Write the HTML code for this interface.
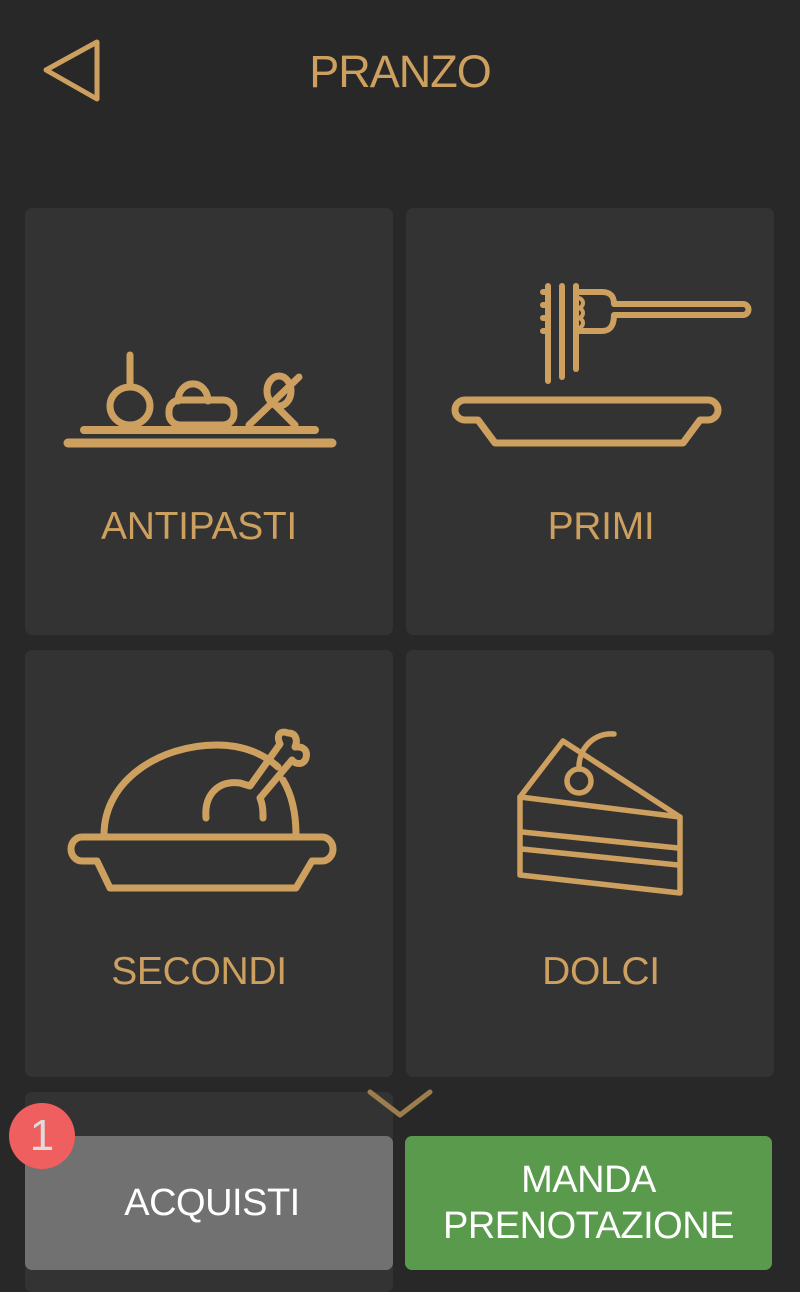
<!DOCTYPE html>
<html><head><meta charset="utf-8"><style>
html,body{margin:0;padding:0;background:#282828;width:800px;height:1280px;overflow:hidden;font-family:"Liberation Sans",sans-serif}
.c{position:absolute;background:#333;border-radius:7px}
.t{position:absolute;color:#CDA060;font-size:39px;text-align:center;letter-spacing:-0.3px}
.b{position:absolute;border-radius:7px;color:#fff;font-size:38px;text-align:center;display:flex;align-items:center;justify-content:center;line-height:46px;letter-spacing:-0.5px}
</style></head><body>
<div class="c" style="left:25px;top:208px;width:368px;height:427px"></div>
<div class="c" style="left:406px;top:208px;width:368px;height:427px"></div>
<div class="c" style="left:25px;top:650px;width:368px;height:427px"></div>
<div class="c" style="left:406px;top:650px;width:368px;height:427px"></div>
<div class="c" style="left:25px;top:1092px;width:368px;height:200px"></div>
<div class="t" style="left:200px;top:46px;width:400px;font-size:45px;letter-spacing:-1px">PRANZO</div>
<div class="t" style="left:15px;top:505px;width:368px">ANTIPASTI</div>
<div class="t" style="left:406px;top:505px;width:390px">PRIMI</div>
<div class="t" style="left:15px;top:950px;width:368px">SECONDI</div>
<div class="t" style="left:406px;top:950px;width:390px">DOLCI</div>
<div class="b" style="left:25px;top:1136px;width:368px;height:134px;background:#717171"><span style="margin-left:6px">ACQUISTI</span></div>
<div class="b" style="left:405px;top:1136px;width:367px;height:134px;background:#5A9A4C">MANDA<br>PRENOTAZIONE</div>
<div style="position:absolute;left:9px;top:1103px;width:66px;height:66px;border-radius:50%;background:#EF5F5F;color:#ddd;font-size:44px;text-align:center;line-height:66px">1</div>
<svg width="800" height="1280" style="position:absolute;left:0;top:0" fill="none" stroke="#CDA060" stroke-linecap="round" stroke-linejoin="round">
<path d="M46 70 L97 42 L97 99 Z" stroke-width="5"/>
<path d="M370 1092 L400 1115 L430 1092" stroke="#9C7D4E" stroke-width="5"/>
<g stroke-width="7">
<line x1="68" y1="443" x2="332" y2="443" stroke-width="9"/>
<line x1="84" y1="430" x2="315" y2="430" stroke-width="8"/>
<line x1="130" y1="355" x2="130" y2="385"/>
<ellipse cx="130" cy="406" rx="20" ry="19"/>
<path d="M178 401 A14 16 0 0 1 208 401"/>
<rect x="169" y="400" width="65" height="25" rx="11"/>
<ellipse cx="279" cy="391" rx="12" ry="15"/>
<line x1="299" y1="377" x2="249" y2="425"/>
<line x1="274" y1="404" x2="295" y2="425"/>
</g>
<g stroke-width="6">
<line x1="548" y1="286" x2="548" y2="381"/>
<line x1="562" y1="286" x2="562" y2="377"/>
<line x1="576" y1="286" x2="576" y2="369"/>
<path d="M543 292h3 M543 305h3 M543 318h3 M543 331h3"/>
<path d="M576 292 H602 Q614 292 614 304 H743 a5.5 5.5 0 0 1 0 11 H614 Q614 331 602 331 H576"/>
<path d="M578 298a5 5 0 0 1 0 10 a5 5 0 0 1 0 10 a5 5 0 0 1 0 10" stroke-width="4"/>
<path d="M465 400 H708 a10 10 0 0 1 0 20 H700 L683 443 H495 L478 420 H465 a10 10 0 0 1 0 -20 Z" stroke-width="7"/>
</g>
<g stroke-width="7">
<path d="M82 837 H322 a11 12 0 0 1 0 24 H312 L296 888 H110 L97 861 H82 a11 12 0 0 1 0 -24 Z"/>
<path d="M104 835 C104 780 160 745 217 745 C245 745 265 755 278 767"/>
<path d="M283 780 C292 795 296 815 296 835"/>
<path d="M206 818 C204 795 218 780 240 783 L250 786 L280 744 C276 735 280 730 288 733 C296 733 298 740 295 747 C303 746 308 750 306 758 C304 765 296 765 292 760 L260 798 C263 805 263 812 263 818"/>
</g>
<g stroke-width="5.5">
<path d="M520 797 L563 741 L680 817 Z"/>
<path d="M520 797 V875 L680 893 V817"/>
<line x1="522" y1="832" x2="678" y2="848"/>
<line x1="522" y1="849" x2="678" y2="865"/>
<ellipse cx="579" cy="781" rx="12" ry="12"/>
<path d="M579 769 C578 748 595 732 614 734"/>
</g>
</svg>
</body></html>
